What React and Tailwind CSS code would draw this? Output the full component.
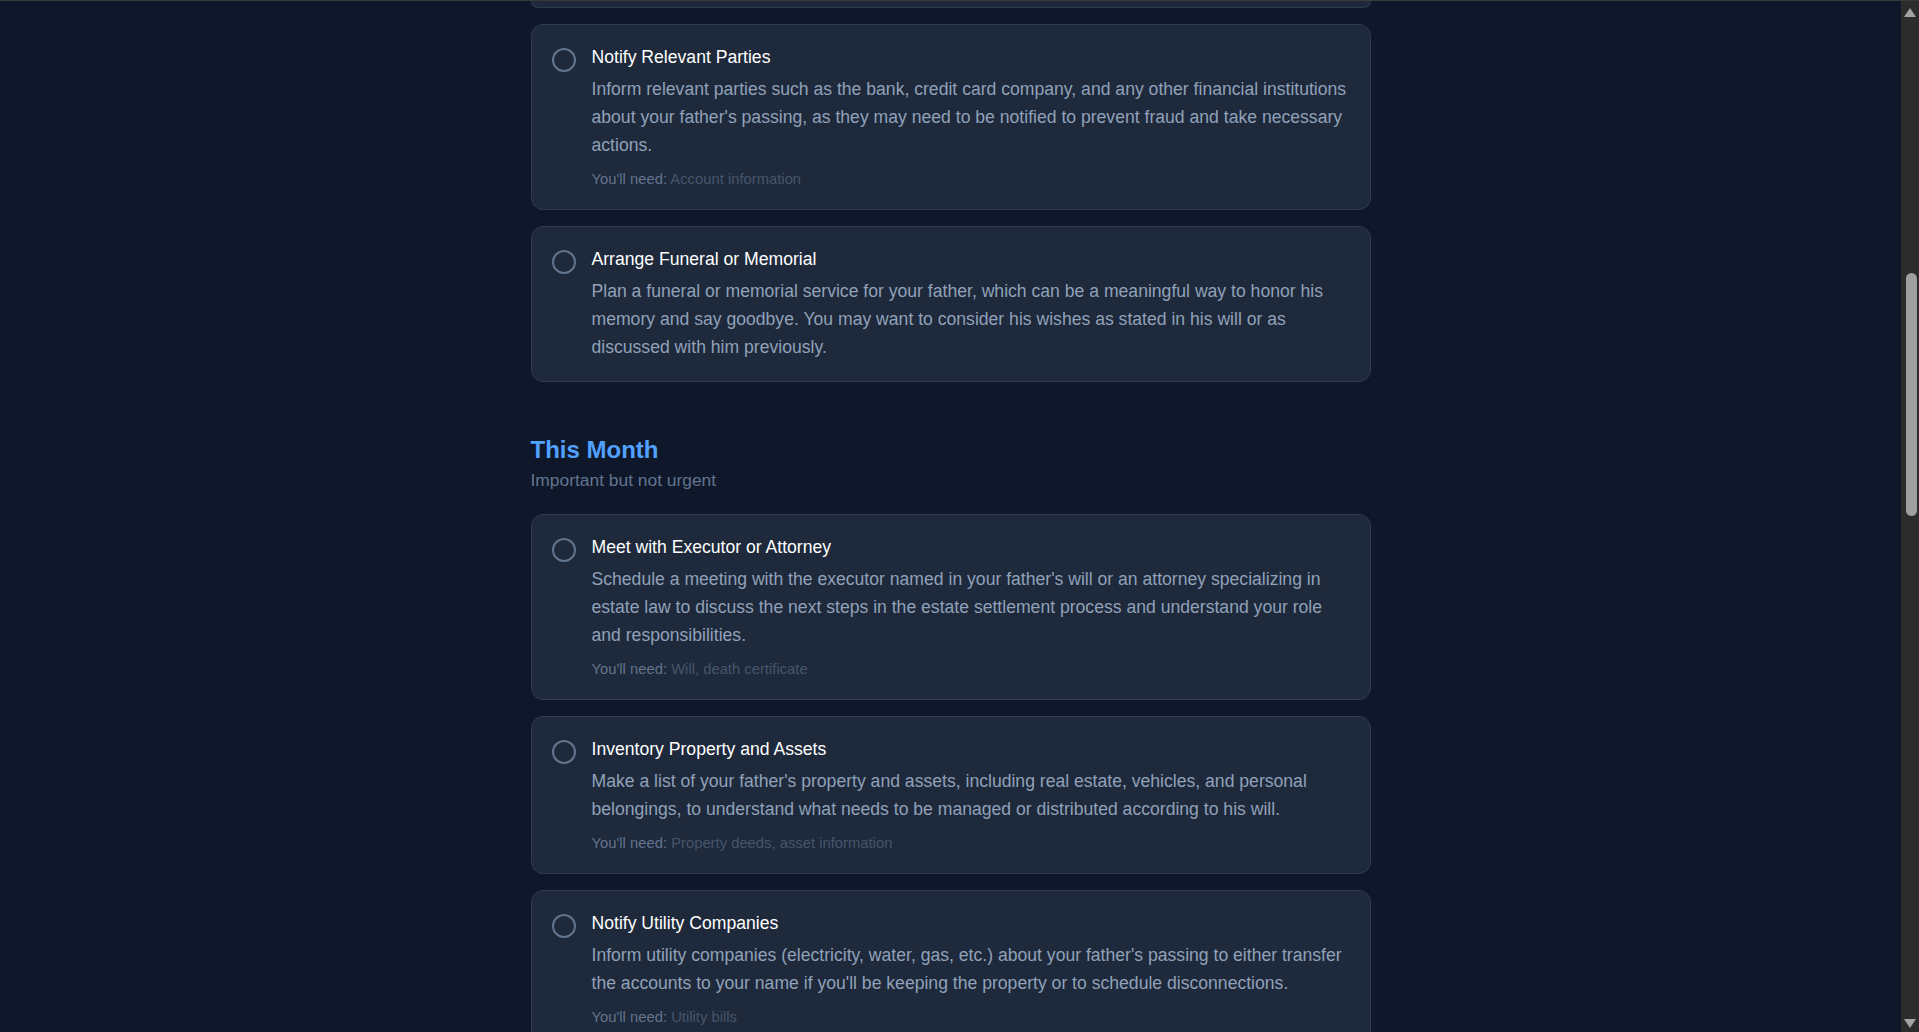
const earlier = [
  {
    title: 'Notify Relevant Parties',
    desc: "Inform relevant parties such as the bank, credit card company, and any other financial institutions about your father's passing, as they may need to be notified to prevent fraud and take necessary actions.",
    need: 'Account information',
  },
  {
    title: 'Arrange Funeral or Memorial',
    desc: 'Plan a funeral or memorial service for your father, which can be a meaningful way to honor his memory and say goodbye. You may want to consider his wishes as stated in his will or as discussed with him previously.',
  },
];

const thisMonth = [
  {
    title: 'Meet with Executor or Attorney',
    desc: "Schedule a meeting with the executor named in your father's will or an attorney specializing in estate law to discuss the next steps in the estate settlement process and understand your role and responsibilities.",
    need: 'Will, death certificate',
  },
  {
    title: 'Inventory Property and Assets',
    desc: "Make a list of your father's property and assets, including real estate, vehicles, and personal belongings, to understand what needs to be managed or distributed according to his will.",
    need: 'Property deeds, asset information',
  },
  {
    title: 'Notify Utility Companies',
    desc: "Inform utility companies (electricity, water, gas, etc.) about your father's passing to either transfer the accounts to your name if you'll be keeping the property or to schedule disconnections.",
    need: 'Utility bills',
  },
];

function TaskCard({ item }) {
  return (
    <div className="rounded-xl border border-[#2f3b4f] bg-[#1e293b] p-5">
      <div className="flex items-start gap-4">
        <button className="mt-[3px] h-6 w-6 flex-shrink-0 rounded-full border-2 border-slate-500" />
        <div className="flex-1 min-w-0">
          <h3 className="text-[17.6px] leading-6 font-medium text-white">{item.title}</h3>
          <p className="mt-[6px] text-[17.6px] leading-7 text-slate-400">{item.desc}</p>
          {item.need && (
            <p className="mt-2.5 text-[14.8px] leading-5 text-slate-500">
              You'll need: <span className="text-slate-600">{item.need}</span>
            </p>
          )}
        </div>
      </div>
    </div>
  );
}

function ScrollBar() {
  return (
    <div className="flex w-[18px] flex-shrink-0 flex-col items-center bg-[#2c2c2c]">
      <div className="mt-[7px] h-0 w-0 border-x-[6px] border-b-[9px] border-x-transparent border-b-[#a3a3a3]" />
      <div className="mt-[256px] ml-[5px] h-[243px] w-[11px] self-start rounded-full bg-[#9f9f9f]" />
      <div className="flex-1" />
      <div className="mb-[4px] h-0 w-0 border-x-[6px] border-t-[9px] border-x-transparent border-t-[#a3a3a3]" />
    </div>
  );
}

export default function App() {
  return (
    <div className="flex h-screen overflow-hidden border-t border-[#3a3a3a] bg-[#0f172a] font-['Liberation_Sans',Arial,sans-serif]">
      <main className="flex-1 overflow-hidden">
        <div className="mx-auto w-[840px]">
          <div className="flex flex-col gap-4">
            <div className="h-[7px] rounded-b-xl border border-t-0 border-[#2f3b4f] bg-[#1e293b]" />
            {earlier.map((item) => (
              <TaskCard key={item.title} item={item} />
            ))}
          </div>

          <section className="mt-[52px]">
            <h2 className="text-2xl font-bold text-blue-400">This Month</h2>
            <p className="mb-[20px] text-[17.4px] leading-7 text-slate-500">Important but not urgent</p>
            <div className="flex flex-col gap-4">
              {thisMonth.map((item) => (
                <TaskCard key={item.title} item={item} />
              ))}
            </div>
          </section>
        </div>
      </main>
      <ScrollBar />
    </div>
  );
}
